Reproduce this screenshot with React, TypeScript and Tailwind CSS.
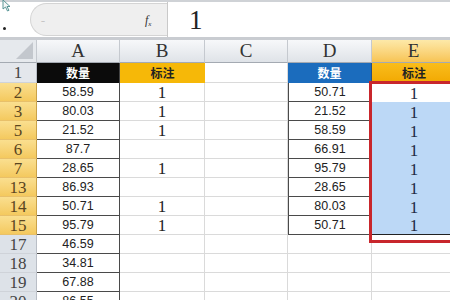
import React from "react";

interface Row {
  num: string;
  picked: boolean;
  a: string;
  b: string;
  d: string;
  e: string;
}

const rows: Row[] = [
  { num: "2", picked: true, a: "58.59", b: "1", d: "50.71", e: "1" },
  { num: "3", picked: true, a: "80.03", b: "1", d: "21.52", e: "1" },
  { num: "5", picked: true, a: "21.52", b: "1", d: "58.59", e: "1" },
  { num: "6", picked: true, a: "87.7", b: "", d: "66.91", e: "1" },
  { num: "7", picked: true, a: "28.65", b: "1", d: "95.79", e: "1" },
  { num: "13", picked: true, a: "86.93", b: "", d: "28.65", e: "1" },
  { num: "14", picked: true, a: "50.71", b: "1", d: "80.03", e: "1" },
  { num: "15", picked: true, a: "95.79", b: "1", d: "50.71", e: "1" },
  { num: "17", picked: false, a: "46.59", b: "", d: "", e: "" },
  { num: "18", picked: false, a: "34.81", b: "", d: "", e: "" },
  { num: "19", picked: false, a: "67.88", b: "", d: "", e: "" },
  { num: "20", picked: false, a: "86.55", b: "", d: "", e: "" },
];

const serif = "font-['Liberation_Serif',serif]";
const sans = "font-['Liberation_Sans',sans-serif]";
const cjk = "font-['Noto_Sans_CJK_SC',sans-serif]";

const FormulaBar: React.FC = () => (
  <div className="h-[40px] border-t-[2px] border-[#cfd2d6] border-b-[3px] border-b-[#c9ccd1] flex bg-white relative">
    {/* mouse cursor */}
    <svg className="absolute left-[2px] top-[-2px]" width="10" height="12" viewBox="0 0 10 12">
      <path d="M1 0 L1 9 L3.5 7 L5.5 11 L7 10.3 L5 6.5 L8 6.5 Z" fill="#f4f6f6" stroke="#4a8c8c" strokeWidth="0.9" />
    </svg>
    <div className="w-[30px] relative">
      <div className="absolute left-[3px] top-[25px] w-[3px] h-[3px] bg-[#222] rounded-full" />
    </div>
    <div className="w-[137px] h-[33px] mt-[1px] bg-[#efefef] rounded-l-[17px] border border-[#d4d4d4] border-r-0 relative">
      <span className="absolute left-[10px] top-[11px] text-[8px] text-[#bbb]">–</span>
      <span className={`absolute left-[114px] top-[7px] text-[12px] italic ${serif} text-[#333]`}>
        f<sub className="text-[7px]">x</sub>
      </span>
    </div>
    <div className="flex-1 border-l border-[#c9c9c9] pl-[21px] pt-[2px]">
      <span className={`${serif} text-[27px] leading-[32px] text-[#222]`}>1</span>
    </div>
  </div>
);

const colHead = "h-[23px] flex items-center justify-center border-r border-b border-r-[#c5c9cf] border-b-[#a4aab2] text-[19px] text-[#333]";

const App: React.FC = () => {
  return (
    <div className="w-[450px] h-[300px] overflow-hidden bg-white">
      <FormulaBar />
      <div className="relative">
        <div className="grid grid-cols-[37px_83px_85px_83px_84px_120px]">
          {/* column headers */}
          <div className="h-[23px] bg-[#e6e9ed] border-r border-b border-r-[#c5c9cf] border-b-[#a4aab2] relative">
            <div className="absolute right-[3px] bottom-[3px] w-0 h-0 border-l-[17px] border-l-transparent border-b-[17px] border-b-[#c3c7cd]" />
          </div>
          {["A", "B", "C", "D"].map((c) => (
            <div key={c} className={`${colHead} ${serif} bg-gradient-to-b from-[#f7f8fa] to-[#dfe3e8]`}>
              {c}
            </div>
          ))}
          <div className={`${colHead} ${serif} bg-gradient-to-b from-[#fde9a8] to-[#f7c453]`}>
            <span className="-ml-[36px]">E</span>
          </div>

          {/* row 1 */}
          <div className={`h-[20px] flex items-center justify-center bg-[#e4e7ec] border-r border-b border-r-[#b9bec6] border-b-[#cfd3d9] ${serif} text-[17px] text-[#444]`}>
            1
          </div>
          <div className={`h-[20px] flex items-center justify-center bg-[#0b0b0b] text-white text-[12px] font-bold ${cjk} border-r border-[#444]`}>
            数量
          </div>
          <div className={`h-[20px] flex items-center justify-center bg-[#f6b808] text-[#222] text-[12px] font-bold ${cjk}`}>
            标注
          </div>
          <div className="h-[20px] border-r border-b border-[#dadada]" />
          <div className={`h-[20px] flex items-center justify-center bg-[#1b6cbd] text-white text-[12px] font-bold ${cjk} border-r border-[#2a4f80]`}>
            数量
          </div>
          <div className={`h-[20px] flex items-center bg-gradient-to-b from-[#f9bd1a] to-[#f2a800] text-[#222] text-[12px] font-bold ${cjk}`}>
            <span className="w-[84px] text-center">标注</span>
          </div>

          {rows.map((r, i) => {
            const inD = r.d !== "";
            const lastD = i === 7;
            return (
              <React.Fragment key={r.num}>
                <div
                  className={`h-[19px] flex items-center justify-center border-r border-b ${serif} text-[17px] leading-none ${
                    r.picked
                      ? "bg-gradient-to-b from-[#fadf8f] to-[#f4c95e] text-[#5a4520] border-r-[#c9a24a] border-b-[#e8c06a]"
                      : "bg-[#dde2e8] text-[#444] border-r-[#b9bec6] border-b-[#cfd3d9]"
                  }`}
                >
                  {r.num}
                </div>
                <div className={`h-[19px] flex items-center justify-center border-r border-b border-[#4a4a4a] ${sans} text-[12.5px] text-[#222]`}>
                  {r.a}
                </div>
                <div className={`h-[19px] flex items-end justify-center border-r border-b border-[#dadada] ${serif} text-[17px] leading-[17px] text-[#222]`}>
                  {r.b}
                </div>
                <div className="h-[19px] border-r border-b border-[#dadada]" />
                <div
                  className={`h-[19px] flex items-center justify-center ${sans} text-[12.5px] text-[#222] ${
                    inD ? "border-l border-r border-b border-[#4a4a4a]" : "border-r border-b border-[#dadada]"
                  }`}
                >
                  {r.d}
                </div>
                <div
                  className={`h-[19px] flex items-end ${serif} text-[17px] leading-[17px] text-[#1f2a44] ${
                    inD ? (i === 0 ? "bg-white" : "bg-[#bcd8f6]") : "border-b border-[#dadada]"
                  } ${lastD ? "border-b border-[#222]" : ""}`}
                >
                  <span className="w-[84px] text-center">{r.e}</span>
                </div>
              </React.Fragment>
            );
          })}
        </div>
        {/* selection frame */}
        <div className="absolute left-[369px] top-[41px] w-[120px] h-[162px] border-[3px] border-[#c8262c]" />
      </div>
    </div>
  );
};

export default App;
